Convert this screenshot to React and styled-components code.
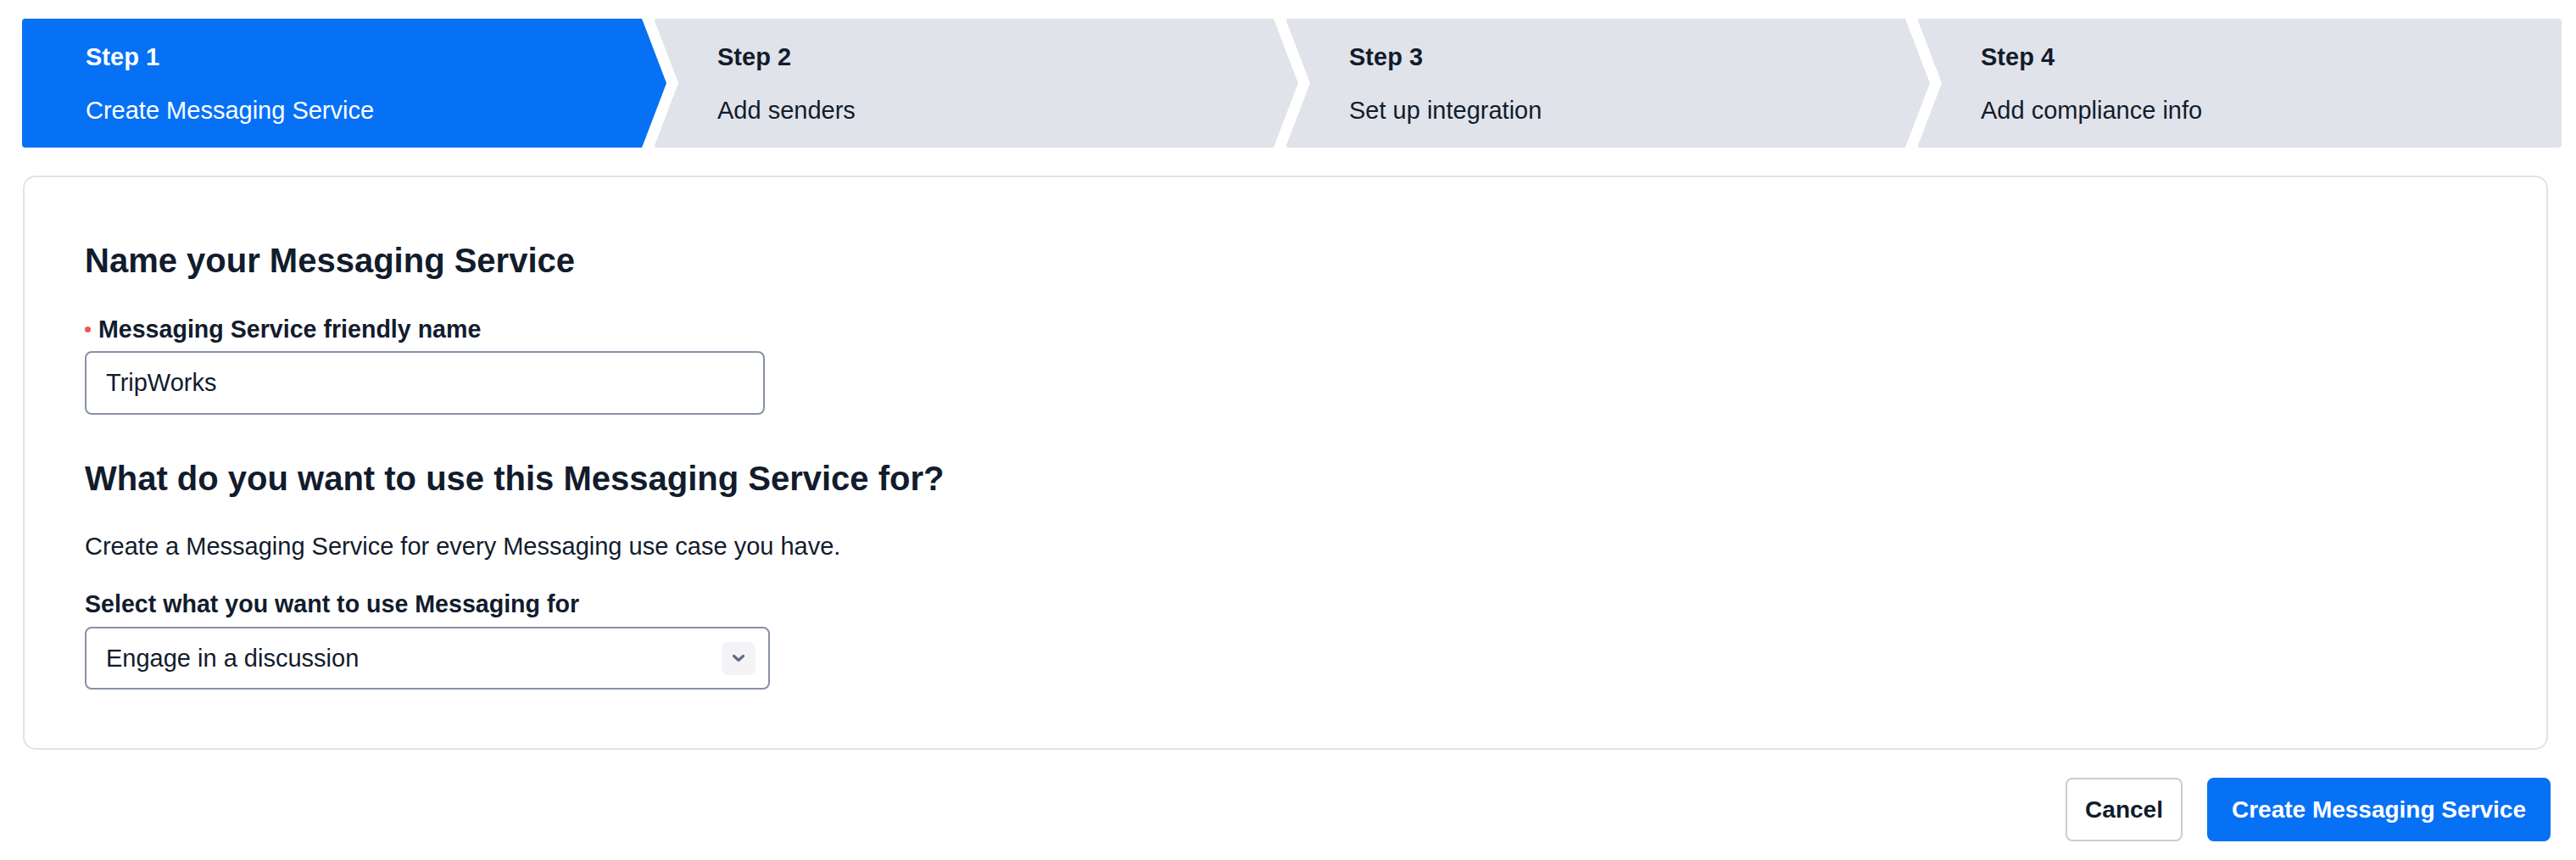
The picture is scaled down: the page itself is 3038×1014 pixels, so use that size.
import React from "react";
import styled, { createGlobalStyle } from "styled-components";

const GlobalStyle = createGlobalStyle`
    body {
        margin: 0;
        background: #ffffff;
        font-family: "Liberation Sans", Arial, sans-serif;
        color: #121c2d;
    }
`

const Page = styled.div`
    padding: 22px 17px 40px 26px;
`

// progress arrows across the top
const Stepper = styled.ol`
    display: flex;
    margin: 0;
    padding: 0;
    list-style: none;
`

const TIP = 29;

const shapes = {
    first: `polygon(0 0, calc(100% - ${TIP}px) 0, 100% 50%, calc(100% - ${TIP}px) 100%, 0 100%)`,
    middle: `polygon(0 0, calc(100% - ${TIP}px) 0, 100% 50%, calc(100% - ${TIP}px) 100%, 0 100%, ${TIP}px 50%)`,
    last: `polygon(0 0, 100% 0, 100% 100%, 0 100%, ${TIP}px 50%)`,
}

const Step = styled.li`
    flex: 1;
    height: 152px;
    box-sizing: border-box;
    padding: 0 75px;
    display: flex;
    flex-direction: column;
    justify-content: center;
    gap: 27px;
    border-radius: 4px;
    background: ${p => p.$active ? "#0671f5" : "#e1e3ea"};
    color: ${p => p.$active ? "#ffffff" : "#121c2d"};
    clip-path: ${p => shapes[p.$shape]};

    & + & {
        margin-left: -15px;
    }
`
const StepLabel = styled.span`
    font-size: 29px;
    line-height: 36px;
    font-weight: 700;
`
const StepText = styled.span`
    font-size: 29px;
    line-height: 36px;
`

const Card = styled.section`
    margin: 33px 16px 0 1px;
    border: 2px solid #e1e3ea;
    border-radius: 15px;
    padding: 74px 0 69px 71px;
`
const Heading = styled.h2`
    margin: ${p => p.$top || 0}px 0 0;
    font-size: 40px;
    line-height: 48px;
    font-weight: 700;
    color: #121c2d;
`
const Label = styled.label`
    display: flex;
    align-items: center;
    gap: 9px;
    margin-top: ${p => p.$top}px;
    font-size: 28.6px;
    line-height: 36px;
    font-weight: 700;
`
const RequiredDot = styled.span`
    width: 7px;
    height: 7px;
    border-radius: 50%;
    background: #eb5757;
`
const TextInput = styled.input`
    display: block;
    margin-top: 8px;
    width: 802px;
    height: 75px;
    box-sizing: border-box;
    border: 2px solid #8891aa;
    border-radius: 8px;
    padding: 0 23px;
    font-family: inherit;
    font-size: 29px;
    color: #121c2d;
    outline: none;
`
const HelpText = styled.p`
    margin: 38px 0 0;
    font-size: 29px;
    line-height: 36px;
`
const SelectBox = styled.div`
    display: flex;
    align-items: center;
    justify-content: space-between;
    margin-top: 9px;
    width: 808px;
    height: 74px;
    box-sizing: border-box;
    border: 2px solid #8891aa;
    border-radius: 8px;
    padding: 0 15px 0 23px;
    font-size: 29px;
`
const ChevronBox = styled.span`
    display: flex;
    align-items: center;
    justify-content: center;
    width: 40px;
    height: 39px;
    border-radius: 8px;
    background: #f4f4f6;
`

const Footer = styled.div`
    display: flex;
    justify-content: flex-end;
    gap: 29px;
    margin: 33px 13px 0 0;
`
const Button = styled.button`
    height: 75px;
    box-sizing: border-box;
    border-radius: 8px;
    padding: 0 ${p => p.$primary ? 27 : 21}px;
    font-family: inherit;
    font-size: 28px;
    font-weight: 700;
    border: 2px solid ${p => p.$primary ? "#0671f5" : "#cacdd8"};
    background: ${p => p.$primary ? "#0671f5" : "#ffffff"};
    color: ${p => p.$primary ? "#ffffff" : "#121c2d"};
    cursor: pointer;
`

const steps = [
    { label: "Step 1", text: "Create Messaging Service" },
    { label: "Step 2", text: "Add senders" },
    { label: "Step 3", text: "Set up integration" },
    { label: "Step 4", text: "Add compliance info" },
]

const Chevron = () => (
    <svg width="16" height="10" viewBox="0 0 16 10" fill="none">
        <path d="M2.5 2.5 L8 7.5 L13.5 2.5" stroke="#606b85" strokeWidth="3.2" strokeLinecap="round" strokeLinejoin="round" />
    </svg>
)

const App = () => (
    <Page>
        <GlobalStyle />
        <Stepper>
            {steps.map((s, i) => (
                <Step
                    key={s.label}
                    $active={i === 0}
                    $shape={i === 0 ? "first" : i === steps.length - 1 ? "last" : "middle"}
                >
                    <StepLabel>{s.label}</StepLabel>
                    <StepText>{s.text}</StepText>
                </Step>
            ))}
        </Stepper>

        <Card>
            <Heading>Name your Messaging Service</Heading>
            <Label $top={39}>
                <RequiredDot />
                Messaging Service friendly name
            </Label>
            <TextInput defaultValue="TripWorks" />

            <Heading $top={51}>What do you want to use this Messaging Service for?</Heading>
            <HelpText>Create a Messaging Service for every Messaging use case you have.</HelpText>
            <Label $top={32}>Select what you want to use Messaging for</Label>
            <SelectBox>
                Engage in a discussion
                <ChevronBox><Chevron /></ChevronBox>
            </SelectBox>
        </Card>

        <Footer>
            <Button>Cancel</Button>
            <Button $primary>Create Messaging Service</Button>
        </Footer>
    </Page>
)

export default App;
